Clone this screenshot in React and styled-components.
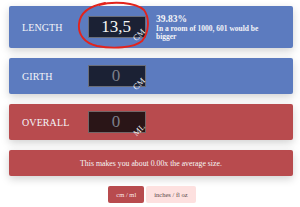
import React from 'react'
import styled, { createGlobalStyle } from 'styled-components'

const GlobalStyle = createGlobalStyle`
  html, body {
    margin: 0;
    padding: 0;
    background: #ffffff;
  }
  body {
    font-family: "Liberation Serif", "Times New Roman", serif;
  }
`

const COLORS = {
  blue: { bg: '#5c7bbf', field: '#1b2134' },
  red: { bg: '#b84b4e', field: '#2a1517' },
}

const rows = [
  { label: 'LENGTH', value: '13,5', unit: 'CM', tone: 'blue', filled: true, circled: true,
    percent: '39.83%', note: 'In a room of 1000, 601 would be bigger' },
  { label: 'GIRTH', value: '0', unit: 'CM', tone: 'blue' },
  { label: 'OVERALL', value: '0', unit: 'ML', tone: 'red' },
]

const App = () => {
  return (
    <>
      <GlobalStyle />
      <Page>
        {rows.map((row) => (
          <Panel key={row.label} tone={row.tone}>
            <Label>{row.label}</Label>
            <FieldWrap>
              <Field tone={row.tone} filled={row.filled}>
                <Value>{row.value}</Value>
                <Unit>{row.unit}</Unit>
              </Field>
              {row.circled && (
                <Circle viewBox="0 0 72 48" fill="none">
                  <path
                    d="M22 4 C36 0 58 1 67 9 C73 17 72 32 65 40 C57 47 36 48 20 45 C7 42 1 33 2 23 C3 12 12 5 28 2"
                    stroke="#e3231c"
                    strokeWidth="1.9"
                    strokeLinecap="round"
                  />
                </Circle>
              )}
            </FieldWrap>
            {row.percent && (
              <Stats>
                <Percent>{row.percent}</Percent>
                <Note>{row.note}</Note>
              </Stats>
            )}
          </Panel>
        ))}
        <Summary>This makes you about 0.00x the average size.</Summary>
        <Switch>
          <UnitButton active>cm / ml</UnitButton>
          <UnitButton>inches / fl oz</UnitButton>
        </Switch>
      </Page>
    </>
  )
}

export default App

const Page = styled.div`
  display: flex;
  flex-direction: column;
  gap: 10px;
  padding: 6px 7px 0 9px;
`

const Panel = styled.div`
  display: flex;
  align-items: center;
  min-height: 36px;
  padding: 7px 0 7px 13px;
  box-sizing: border-box;
  background: ${(p) => COLORS[p.tone].bg};
  border-radius: 2px;
  box-shadow: 0 3px 9px rgba(0, 0, 0, 0.18);
  color: #f4f4f8;
`

const Label = styled.div`
  width: 66px;
  font-size: 10px;
  letter-spacing: 0.1px;
`

const FieldWrap = styled.div`
  position: relative;
  width: 58px;
  height: 22px;
`

const Field = styled.div`
  position: relative;
  width: 100%;
  height: 100%;
  box-sizing: border-box;
  background: ${(p) => COLORS[p.tone].field};
  border: 1px solid rgba(255, 255, 255, 0.35);
  display: flex;
  align-items: center;
  justify-content: center;
  font-size: 17px;
  color: ${(p) => (p.filled ? '#f6f6f6' : '#7c7f8a')};
`

const Value = styled.span`
  margin-right: 2px;
`

const Unit = styled.span`
  position: absolute;
  left: 50px;
  top: 18px;
  font-size: 8.5px;
  line-height: 1;
  color: #f4f4f4;
  transform: translate(-50%, -50%) rotate(-45deg);
`

const Circle = styled.svg`
  position: absolute;
  left: -11px;
  top: -15px;
  width: 72px;
  height: 48px;
  pointer-events: none;
`

const Stats = styled.div`
  margin-left: 10px;
  width: 118px;
  font-weight: bold;
`

const Percent = styled.div`
  font-size: 9.5px;
  line-height: 12px;
`

const Note = styled.div`
  font-size: 7.5px;
  line-height: 8px;
`

const Summary = styled.div`
  height: 26px;
  display: flex;
  align-items: center;
  justify-content: center;
  background: ${COLORS.red.bg};
  border-radius: 2px;
  box-shadow: 0 3px 9px rgba(0, 0, 0, 0.18);
  color: #f6f6f6;
  font-size: 7.8px;
`

const Switch = styled.div`
  display: flex;
  justify-content: center;
  gap: 2px;
  padding-left: 2px;
`

const UnitButton = styled.div`
  height: 17px;
  padding: 0 8px;
  display: flex;
  align-items: center;
  border-radius: 2px;
  font-size: 6.5px;
  background: ${(p) => (p.active ? '#b84b4e' : '#fde0df')};
  color: ${(p) => (p.active ? '#fbeaea' : '#5a4848')};
`
